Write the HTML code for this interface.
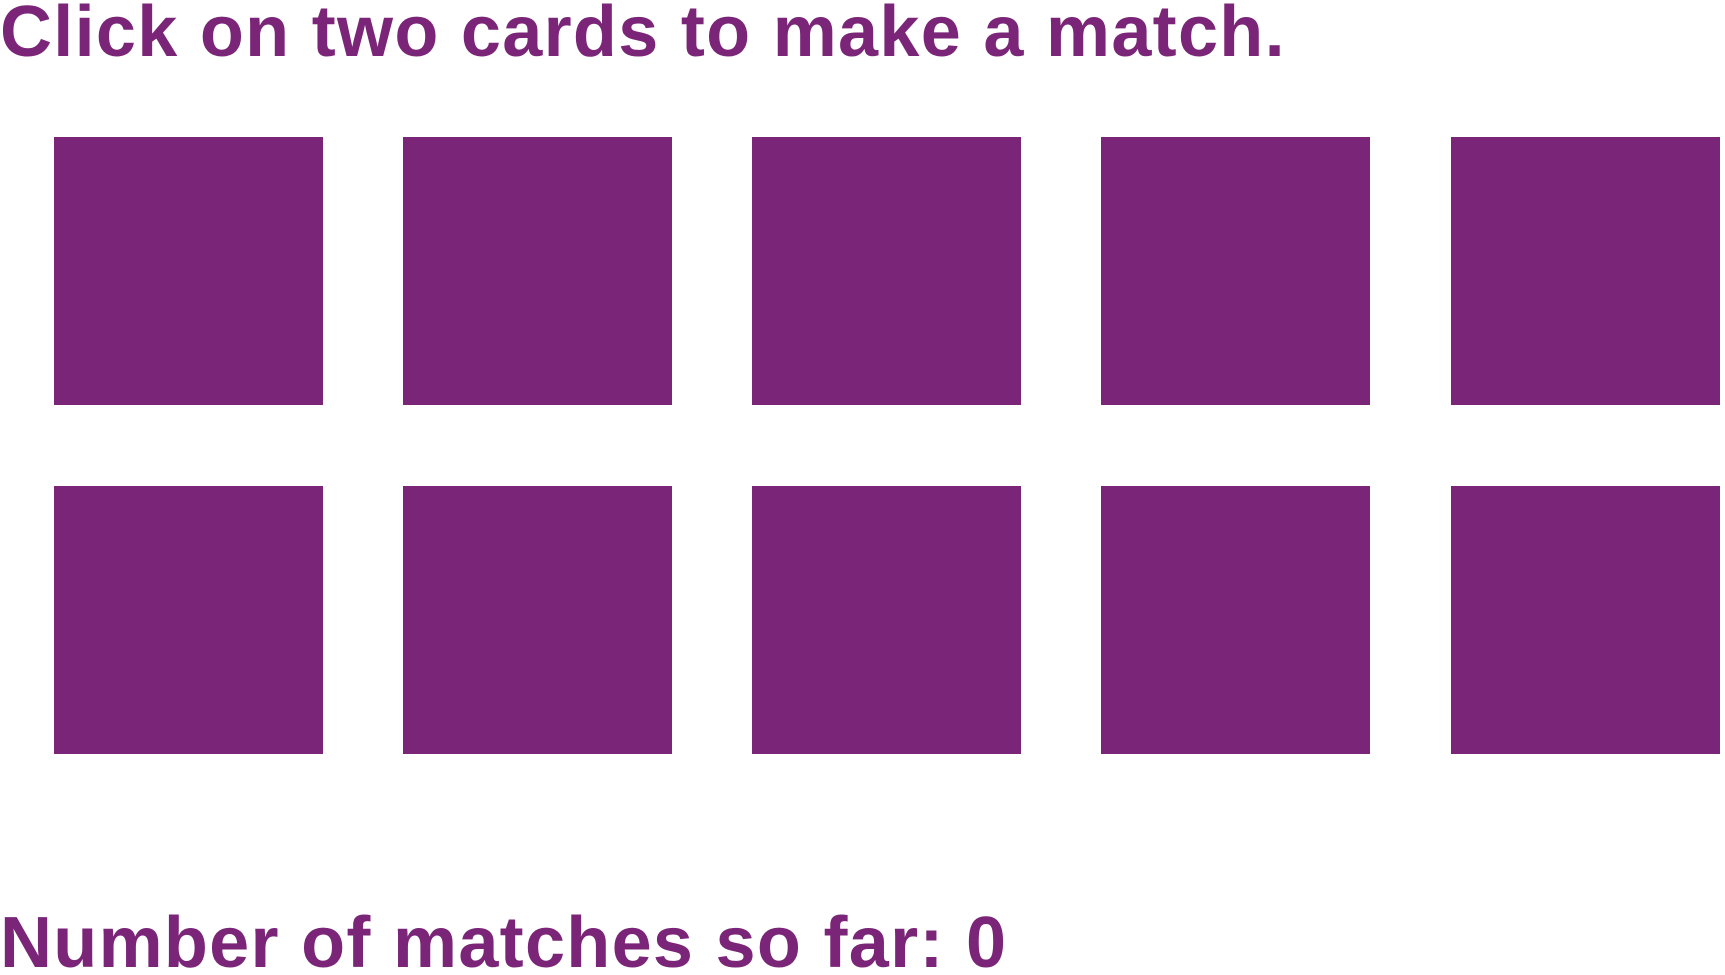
<!DOCTYPE html>
<html><head><meta charset="utf-8"><style>
html,body{margin:0;padding:0;background:#fff;width:1725px;height:975px;overflow:hidden;position:relative}
.t{position:absolute;left:0;font-family:"Liberation Sans",Arial,sans-serif;font-weight:bold;font-size:72px;line-height:1;color:#7a2577;white-space:nowrap;letter-spacing:1.3px}
.c{position:absolute;width:269px;height:268px;background:#7a2577}
</style></head><body>
<div class="t" style="top:-4px">Click on two cards to make a match.</div>
<div class="c" style="left:54px;top:137px"></div>
<div class="c" style="left:403px;top:137px"></div>
<div class="c" style="left:752px;top:137px"></div>
<div class="c" style="left:1101px;top:137px"></div>
<div class="c" style="left:1451px;top:137px"></div>
<div class="c" style="left:54px;top:486px"></div>
<div class="c" style="left:403px;top:486px"></div>
<div class="c" style="left:752px;top:486px"></div>
<div class="c" style="left:1101px;top:486px"></div>
<div class="c" style="left:1451px;top:486px"></div>
<div class="t" style="top:907px">Number of matches so far: 0</div>
</body></html>
